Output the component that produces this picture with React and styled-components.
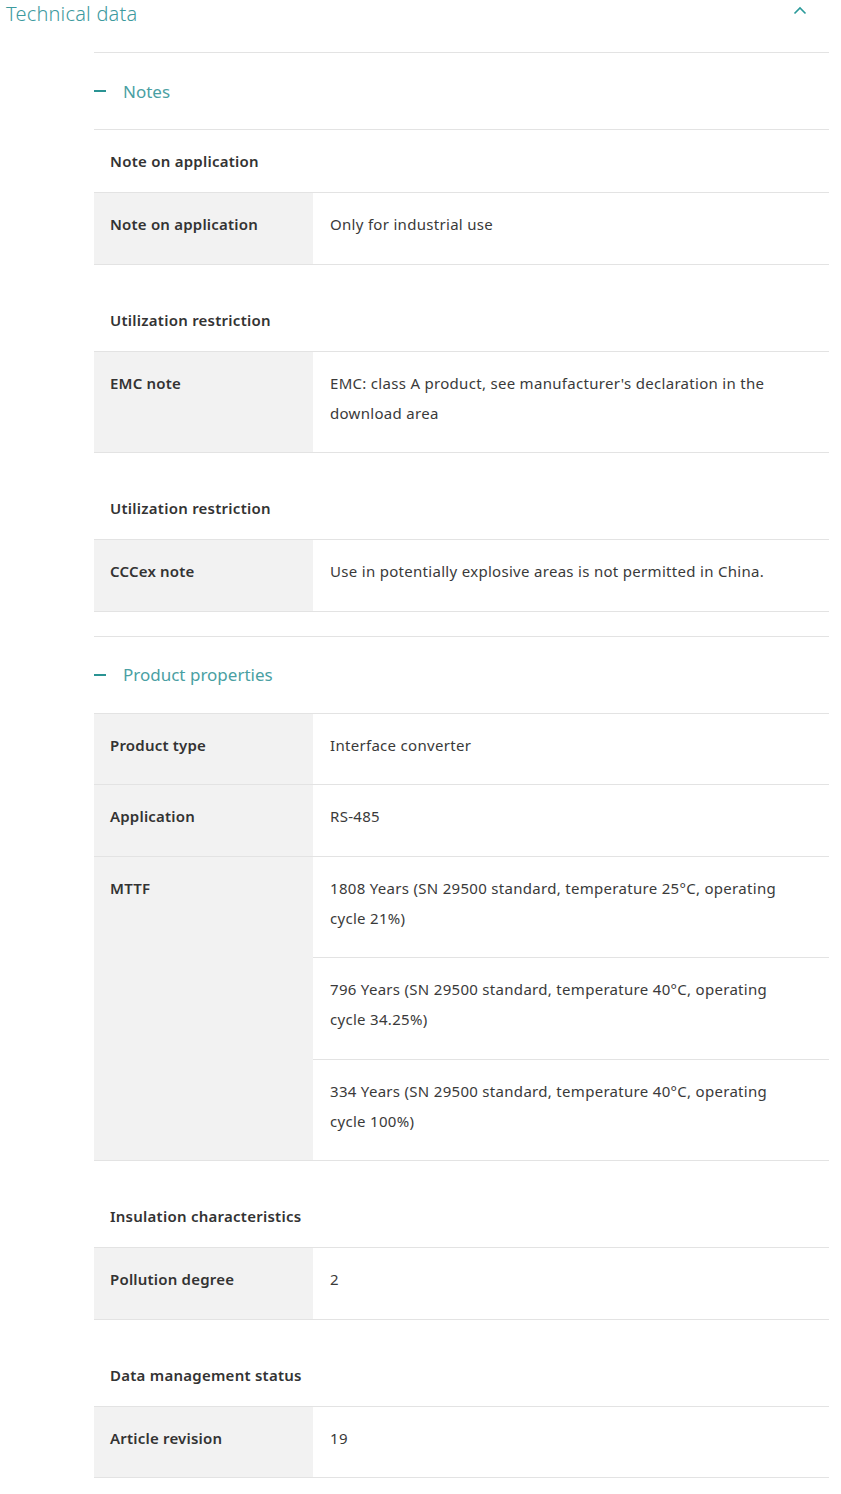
import React from 'react';
import styled, { createGlobalStyle } from 'styled-components';

const GlobalStyle = createGlobalStyle`
  * { box-sizing: border-box; }
  body {
    margin: 0;
    background: #fff;
    font-family: "Noto Sans", "Open Sans", sans-serif;
    color: #333;
  }
`;

const sections = [
  {
    title: 'Notes',
    groups: [
      {
        heading: 'Note on application',
        rows: [{ label: 'Note on application', values: ['Only for industrial use'] }],
      },
      {
        heading: 'Utilization restriction',
        rows: [
          {
            label: 'EMC note',
            values: ["EMC: class A product, see manufacturer's declaration in the download area"],
          },
        ],
      },
      {
        heading: 'Utilization restriction',
        rows: [
          { label: 'CCCex note', values: ['Use in potentially explosive areas is not permitted in China.'] },
        ],
      },
    ],
  },
  {
    title: 'Product properties',
    groups: [
      {
        rows: [
          { label: 'Product type', values: ['Interface converter'] },
          { label: 'Application', values: ['RS-485'] },
          {
            label: 'MTTF',
            values: [
              '1808 Years (SN 29500 standard, temperature 25°C, operating cycle 21%)',
              '796 Years (SN 29500 standard, temperature 40°C, operating cycle 34.25%)',
              '334 Years (SN 29500 standard, temperature 40°C, operating cycle 100%)',
            ],
          },
        ],
      },
      {
        heading: 'Insulation characteristics',
        rows: [{ label: 'Pollution degree', values: ['2'] }],
      },
      {
        heading: 'Data management status',
        rows: [{ label: 'Article revision', values: ['19'] }],
      },
    ],
  },
];

const ChevronUp = () => (
  <svg width="14" height="9" viewBox="0 0 14 9" fill="none">
    <path d="M1.5 7.5L7 2L12.5 7.5" stroke="#2a9a9a" strokeWidth="1.6" />
  </svg>
);

const App = () => (
  <>
    <GlobalStyle />
    <Page>
      <TopBar>
        <Title>Technical data</Title>
        <ChevronUp />
      </TopBar>
      <Body>
        {sections.map((section, si) => (
          <Section key={si}>
            <SectionHeader>
              <Minus />
              <SectionTitle>{section.title}</SectionTitle>
            </SectionHeader>
            {section.groups.map((group, gi) => (
              <Group key={gi} $spaced={gi > 0}>
                {group.heading && <GroupHeading>{group.heading}</GroupHeading>}
                {group.rows.map((row, ri) => (
                  <Row key={ri}>
                    <LabelCell>{row.label}</LabelCell>
                    <Values>
                      {row.values.map((v, vi) => (
                        <ValueCell key={vi}>{v}</ValueCell>
                      ))}
                    </Values>
                  </Row>
                ))}
              </Group>
            ))}
          </Section>
        ))}
      </Body>
    </Page>
  </>
);

const Page = styled.div`
  width: 841px;
  padding-bottom: 17px;
`;

const TopBar = styled.div`
  display: flex;
  align-items: center;
  justify-content: space-between;
  height: 26px;
  padding: 0 34px 0 6px;
  svg {
    margin-top: -6px;
  }
`;

const Title = styled.h2`
  margin: 0;
  font-size: 20px;
  font-weight: 300;
  color: #3d9a9e;
  letter-spacing: 0.2px;
`;

const Body = styled.div`
  margin: 26px 12px 0 94px;
`;

const Section = styled.section`
  border-top: 1px solid #e3e3e3;
  & + & {
    margin-top: 24px;
  }
`;

const SectionHeader = styled.div`
  display: flex;
  align-items: center;
  gap: 17px;
  height: 77px;
  border-bottom: 1px solid #e3e3e3;
`;

const Minus = styled.span`
  width: 12px;
  height: 2px;
  background: #2a9393;
`;

const SectionTitle = styled.h3`
  margin: 0;
  font-size: 17px;
  font-weight: 400;
  color: #4a9fa3;
`;

const Group = styled.div`
  margin-top: ${({ $spaced }) => ($spaced ? '24px' : '0')};
`;

const GroupHeading = styled.div`
  padding: 16px 16px 16px;
  line-height: 30px;
  font-size: 15px;
  font-weight: 600;
  letter-spacing: 0.25px;
  border-bottom: 1px solid #e3e3e3;
`;

const Row = styled.div`
  display: flex;
  border-bottom: 1px solid #e3e3e3;
`;

const LabelCell = styled.div`
  flex: 0 0 219px;
  background: #f2f2f2;
  padding: 16px 16px 24.5px;
  font-size: 15px;
  font-weight: 600;
  line-height: 30px;
  letter-spacing: 0.2px;
`;

const Values = styled.div`
  flex: 1;
  display: flex;
  flex-direction: column;
`;

const ValueCell = styled.div`
  padding: 16px 28px 24.5px 17px;
  font-size: 15px;
  line-height: 30px;
  letter-spacing: 0.3px;
  color: #3a3a3a;
  & + & {
    border-top: 1px solid #e3e3e3;
  }
`;

export default App;
